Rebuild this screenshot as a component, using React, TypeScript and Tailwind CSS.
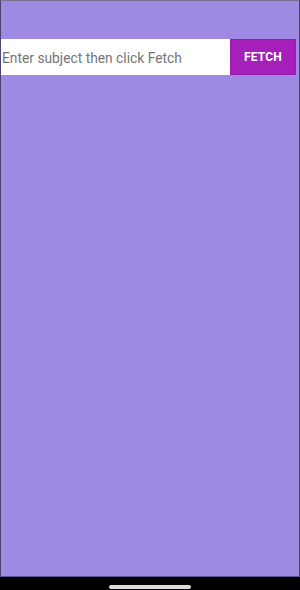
import React from "react";

export default function App() {
  return (
    <div className="w-[300px] h-[590px] bg-black flex flex-col" style={{ fontFamily: "Roboto, 'Noto Sans', sans-serif" }}>
      <div className="h-[577px] bg-[#9e8ae3] border-t border-t-[#7a7290] border-l border-l-[#4b4470] border-r border-r-[#4b4470] border-b border-b-[#5c5296] flex flex-col">
        <div className="mt-[38px] flex h-[36px] pr-[3px]">
          <input
            className="flex-1 min-w-0 bg-white h-full pl-[1px] pt-[2px] text-[13.8px] text-[#333] placeholder:text-[#757575] outline-none"
            placeholder="Enter subject then click Fetch"
          />
          <button className="w-[66px] h-full bg-[#a61fbb] border border-[#9a1cae] text-white font-bold text-[12px] tracking-[0.2px]">
            FETCH
          </button>
        </div>
      </div>
      <div className="flex-1 flex justify-center pt-[8px]">
        <div className="w-[82px] h-[4px] rounded-full bg-[#dcdcdc]" />
      </div>
    </div>
  );
}
